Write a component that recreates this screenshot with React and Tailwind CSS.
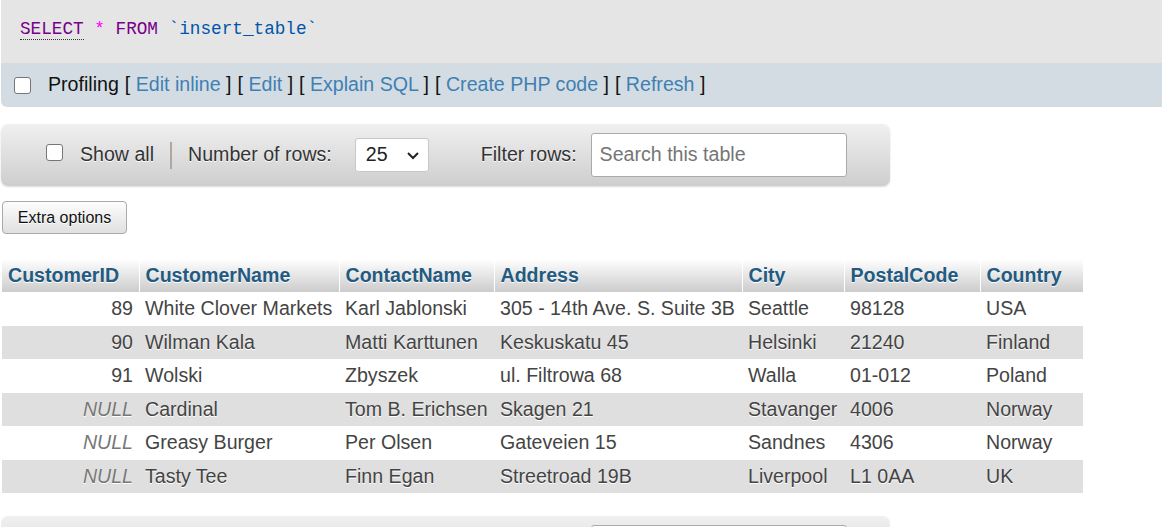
const COLUMNS = [
  { name: "CustomerID", w: "w-[137px]", right: true },
  { name: "CustomerName", w: "w-[200px]" },
  { name: "ContactName", w: "w-[155px]" },
  { name: "Address", w: "w-[248px]" },
  { name: "City", w: "w-[102px]" },
  { name: "PostalCode", w: "w-[136px]" },
  { name: "Country", w: "w-[103px]" },
];

const ROWS = [
  ["89", "White Clover Markets", "Karl Jablonski", "305 - 14th Ave. S. Suite 3B", "Seattle", "98128", "USA"],
  ["90", "Wilman Kala", "Matti Karttunen", "Keskuskatu 45", "Helsinki", "21240", "Finland"],
  ["91", "Wolski", "Zbyszek", "ul. Filtrowa 68", "Walla", "01-012", "Poland"],
  [null, "Cardinal", "Tom B. Erichsen", "Skagen 21", "Stavanger", "4006", "Norway"],
  [null, "Greasy Burger", "Per Olsen", "Gateveien 15", "Sandnes", "4306", "Norway"],
  [null, "Tasty Tee", "Finn Egan", "Streetroad 19B", "Liverpool", "L1 0AA", "UK"],
];

const LINKS = ["Edit inline", "Edit", "Explain SQL", "Create PHP code", "Refresh"];

function Check() {
  return (
    <span className="inline-block w-[17px] h-[17px] shrink-0 rounded-[3px] border border-[#767676] bg-white" />
  );
}

function NavBar() {
  return (
    <div className="ml-px w-[889px] h-[62px] shrink-0 rounded-[7px] bg-gradient-to-b from-[#f0f0f0] to-[#cecece] shadow-[0_1px_2px_rgba(0,0,0,0.15)] flex items-center text-[19.6px] text-[#333] [text-shadow:0_1px_0_#fff]">
      <span className="ml-[45px]"><Check /></span>
      <span className="ml-[17px]">Show all</span>
      <span className="ml-[16px] h-[27px] border-l-2 border-[#b0a8a0]" />
      <span className="ml-[16px]">Number of rows:</span>
      <div className="ml-[23px] w-[74px] h-[34px] rounded-[3px] border border-[#c8c8c8] bg-white flex items-center justify-between pl-[10px] pr-[8px] text-[#222] [text-shadow:none]">
        <span>25</span>
        <svg width="14" height="9" viewBox="0 0 14 9" fill="none">
          <path d="M2 2l5 5 5-5" stroke="#222" strokeWidth="2" />
        </svg>
      </div>
      <span className="ml-[52px]">Filter rows:</span>
      <div className="ml-[14px] w-[256px] h-[44px] rounded-[3px] border border-[#aaa] bg-white flex items-center pl-[8px] text-[#757575] [text-shadow:none]">
        Search this table
      </div>
    </div>
  );
}

export default function App() {
  return (
    <div className="w-[1162px] h-[527px] overflow-hidden bg-white font-['Liberation_Sans',Arial,sans-serif] text-[#444]">
      {/* SQL query box */}
      <div className="h-[63px] ml-px bg-[#e5e5e5] flex items-center pl-[19px] pb-[4px] font-['Liberation_Mono',monospace] text-[17.7px]">
        <span className="text-[#708] border-b border-dotted border-[#333] leading-[20px]">SELECT</span>
        <span className="text-[#f0f]">&nbsp;*&nbsp;</span>
        <span className="text-[#708]">FROM</span>
        <span className="text-[#05a]">&nbsp;`insert_table`</span>
      </div>

      {/* profiling bar */}
      <div className="h-[44px] ml-px bg-[#d3dce3] rounded-bl-[6px] flex items-center pl-[13px] text-[19.6px] text-[#111]">
        <Check />
        <span className="ml-[17px]">Profiling</span>
        {LINKS.map((l) => (
          <span key={l} className="ml-[6px]">
            [ <span className="text-[#3f80b3]">{l}</span> ]
          </span>
        ))}
      </div>

      <div className="mt-[17px]">
        <NavBar />
      </div>

      <button className="mt-[15px] ml-[2px] w-[125px] h-[33px] rounded-[4px] border border-[#aaa] bg-gradient-to-b from-[#fdfdfd] to-[#e0e0e0] text-[16px] text-[#111] [text-shadow:0_1px_0_#fff]">
        Extra options
      </button>

      <table className="mt-[25px] ml-[2px] w-[1081px] table-fixed border-collapse text-[19.6px] [text-shadow:0_1px_0_#fff]">
        <thead>
          <tr className="h-[33px]">
            {COLUMNS.map((c, i) => (
              <th
                key={c.name}
                className={`${c.w} p-0 px-[6px] text-left font-bold text-[#235a81] bg-gradient-to-b from-white to-[#cccccc] ${i < COLUMNS.length - 1 ? "border-r border-white" : ""}`}
              >
                {c.name}
              </th>
            ))}
          </tr>
        </thead>
        <tbody>
          {ROWS.map((r, ri) => (
            <tr key={ri} className={`h-[33.5px] ${ri % 2 ? "bg-[#dfdfdf]" : "bg-white"}`}>
              {r.map((v, ci) => (
                <td
                  key={ci}
                  className={`p-0 px-[6px] whitespace-nowrap overflow-visible ${ci === 0 ? "text-right" : ""}`}
                >
                  {v === null ? <i className="text-[#777]">NULL</i> : v}
                </td>
              ))}
            </tr>
          ))}
        </tbody>
      </table>

      {/* bottom navigation bar, only its top edge is in view */}
      <div className="mt-[23px] ml-px w-[889px] h-[62px] rounded-[7px] bg-gradient-to-b from-[#f0f0f0] to-[#cecece] flex items-start pt-[9px]">
        <div className="ml-[590px] w-[256px] h-[44px] rounded-[3px] border border-[#aaa] bg-white" />
      </div>
    </div>
  );
}
